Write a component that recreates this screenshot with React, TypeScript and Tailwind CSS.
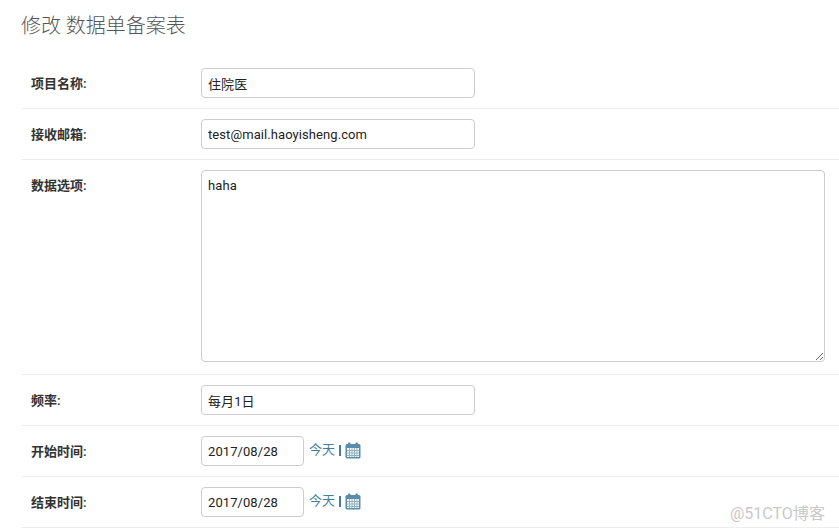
import React from 'react';

const fieldClass =
  'h-[30px] rounded-[4px] border border-[#ccc] bg-white px-[6px] text-[13px] tracking-[0.08px] text-[#222] outline-none';

const labelClass = 'h-[30px] w-[180px] shrink-0 pl-[10px] text-[13px] leading-[32px] font-semibold text-[#333]';

const CalendarIcon: React.FC = () => (
  <svg width="16" height="17" viewBox="0 0 16 17" className="ml-[4px]">
    <rect x="0.5" y="2" width="15" height="14.5" rx="1.5" fill="#5a8cab" />
    <rect x="2" y="6" width="12" height="9" fill="#fff" />
    <path d="M4.5 6v9M7 6v9M9.5 6v9M12 6v9M2 8.5h12M2 11h12M2 13.5h12" stroke="#8fb1c6" strokeWidth="1" fill="none" />
    <rect x="3" y="0.5" width="2.5" height="3.5" rx="1" fill="#5a8cab" />
    <rect x="10.5" y="0.5" width="2.5" height="3.5" rx="1" fill="#5a8cab" />
  </svg>
);

const TextRow: React.FC<{ label: string; value: string }> = ({ label, value }) => (
  <div className="flex border-b border-[#eee] py-[10px]">
    <label className={labelClass}>{label}:</label>
    <input readOnly value={value} className={`${fieldClass} w-[274px]`} />
  </div>
);

const DateRow: React.FC<{ label: string; value: string }> = ({ label, value }) => (
  <div className="flex border-b border-[#eee] py-[10px]">
    <label className={labelClass}>{label}:</label>
    <input readOnly value={value} className={`${fieldClass} w-[103px]`} />
    <div className="ml-[5px] flex h-[28px] items-center text-[13px] text-[#447e9b]">
      <span>今天</span>
      <span className="ml-[4px] h-[11px] w-[2px] bg-[#447e9b]" />
      <CalendarIcon />
    </div>
  </div>
);

const App: React.FC = () => {
  return (
    <div className="relative h-[532px] w-[839px] overflow-hidden bg-white pl-[21px] font-['Roboto','Noto_Sans_CJK_SC',sans-serif]">
      <h1 className="pt-[12px] pb-[17px] text-[20px] leading-[29px] font-light text-[#555]">修改 数据单备案表</h1>

      <TextRow label="项目名称" value="住院医" />
      <TextRow label="接收邮箱" value="test@mail.haoyisheng.com" />

      <div className="flex border-b border-[#eee] pt-[10px] pb-[12px]">
        <label className={labelClass}>数据选项:</label>
        <textarea
          readOnly
          value="haha"
          className="h-[192px] w-[624px] rounded-[4px] border border-[#ccc] bg-white px-[6px] py-[6px] text-[13px] leading-[18px] tracking-[0.08px] text-[#222] outline-none"
        />
      </div>

      <TextRow label="频率" value="每月1日" />
      <DateRow label="开始时间" value="2017/08/28" />
      <DateRow label="结束时间" value="2017/08/28" />

      <div className="absolute top-[502px] left-[730px] text-[16px] leading-[24px] text-[#c9c9c9]">@51CTO博客</div>
    </div>
  );
};

export default App;
